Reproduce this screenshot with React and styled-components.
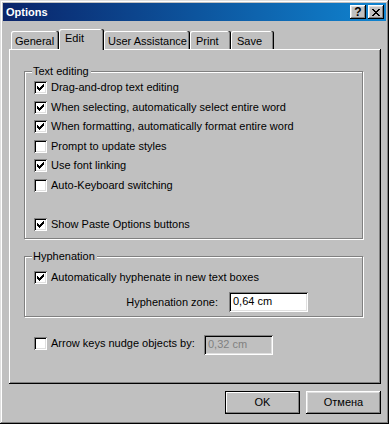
import React from 'react';
import styled, { createGlobalStyle } from 'styled-components';

const GlobalStyle = createGlobalStyle`
  html, body {
    margin: 0;
    padding: 0;
    background: #c0c0c0;
  }
  body {
    font-family: "Liberation Sans", Arial, sans-serif;
    font-size: 11px;
    line-height: 13px;
    color: #000;
  }
`;

const Window = styled.div`
  width: 389px;
  height: 424px;
  box-sizing: border-box;
  padding: 3px;
  background: #c0c0c0;
  box-shadow: inset -1px -1px #000, inset 1px 1px #dfdfdf, inset -2px -2px #808080, inset 2px 2px #fff;
  display: flex;
  flex-direction: column;
`;

const TitleBar = styled.div`
  height: 18px;
  display: flex;
  align-items: center;
  padding: 0 2px 0 3px;
  background: linear-gradient(to right, #0a246a, #1084d0);
  color: #fff;
  font-weight: bold;
`;

const TitleText = styled.span`
  flex: 1;
`;

const CaptionButton = styled.div`
  width: 16px;
  height: 14px;
  box-sizing: border-box;
  margin-left: ${(p) => (p.$gap ? '2px' : '0')};
  background: #c0c0c0;
  box-shadow: inset -1px -1px #000, inset 1px 1px #fff, inset -2px -2px #808080, inset 2px 2px #dfdfdf;
  color: #000;
  display: flex;
  align-items: center;
  justify-content: center;
  font-size: 12px;
  font-weight: bold;
  line-height: 12px;
`;

const TabRow = styled.div`
  display: flex;
  align-items: flex-end;
  height: 20px;
  margin: 8px 0 0 8px;
  position: relative;
  z-index: 1;
`;

const Tab = styled.div`
  box-sizing: border-box;
  width: ${(p) => p.$w}px;
  height: ${(p) => (p.$active ? 21 : 18)}px;
  margin-bottom: ${(p) => (p.$active ? -1 : 0)}px;
  padding: ${(p) => (p.$active ? 3 : 4)}px 0 0 ${(p) => p.$pad}px;
  background: #c0c0c0;
  border-radius: 2px 2px 0 0;
  box-shadow: inset -1px 0 #000, inset -2px 0 #808080, inset 1px 1px #fff;
  white-space: nowrap;
`;

const Panel = styled.div`
  width: 372px;
  height: 335px;
  margin-left: 6px;
  box-sizing: border-box;
  padding: 22px 0 0 15px;
  box-shadow: inset -1px -1px #000, inset 1px 1px #fff, inset -2px -2px #808080;
  display: flex;
  flex-direction: column;
`;

const Group = styled.div`
  width: 339px;
  box-sizing: border-box;
  margin-top: ${(p) => p.$top || 0}px;
  padding: 0 0 4px 9px;
  border: 1px solid #808080;
  box-shadow: 1px 1px 0 #fff, inset 1px 1px #fff;
  display: flex;
  flex-direction: column;
`;

const GroupLabel = styled.div`
  align-self: flex-start;
  margin: -7px 0 0 -2px;
  padding: 0 2px 0 1px;
  background: #c0c0c0;
`;

const Row = styled.div`
  display: flex;
  align-items: center;
  height: ${(p) => p.$h || 19.5}px;
  margin-top: ${(p) => p.$top || 0}px;
`;

const Spacer = styled.div`
  height: 19.5px;
`;

const Box = styled.span`
  width: 13px;
  height: 13px;
  flex: none;
  box-sizing: border-box;
  margin-right: 4px;
  background: #fff;
  box-shadow: inset 1px 1px #808080, inset -1px -1px #fff, inset 2px 2px #000, inset -2px -2px #dfdfdf;
  display: block;
`;

const ZoneRow = styled.div`
  display: flex;
  align-items: center;
  justify-content: flex-end;
  height: 20px;
  margin-top: 5px;
  padding-right: 54px;
`;

const ZoneLabel = styled.span`
  margin-right: 11px;
`;

const Field = styled.div`
  width: ${(p) => p.$w}px;
  height: 20px;
  box-sizing: border-box;
  padding: 3px 0 0 4px;
  background: ${(p) => (p.$disabled ? '#c0c0c0' : '#fff')};
  color: ${(p) => (p.$disabled ? '#808080' : '#000')};
  box-shadow: inset 1px 1px #808080, inset -1px -1px #fff, inset 2px 2px #000, inset -2px -2px #dfdfdf;
`;

const NudgeRow = styled.div`
  display: flex;
  align-items: flex-start;
  height: 20px;
  margin: 18px 0 0 10px;
`;

const NudgeCheck = styled.div`
  display: flex;
  align-items: center;
  width: 170px;
  margin-top: 2px;
`;

const ButtonRow = styled.div`
  display: flex;
  justify-content: flex-end;
  gap: 6px;
  margin: 7px 5px 0 0;
`;

const Button = styled.div`
  width: 75px;
  height: 23px;
  box-sizing: border-box;
  display: flex;
  align-items: center;
  justify-content: center;
  box-shadow: ${(p) =>
    p.$default
      ? 'inset 0 0 0 1px #000, inset -2px -2px #808080, inset 2px 2px #fff'
      : 'inset -1px -1px #000, inset 1px 1px #fff, inset -2px -2px #808080, inset 2px 2px #dfdfdf'};
`;

const checkCols = [2, 3, 4, 3, 2, 1, 0];

function Checkbox({ checked }) {
  return (
    <Box>
      {checked && (
        <svg width="13" height="13" shapeRendering="crispEdges">
          {checkCols.map((y, i) => (
            <rect key={i} x={3 + i} y={3 + y} width="1" height="3" fill="#000" />
          ))}
        </svg>
      )}
    </Box>
  );
}

function Option({ checked, children }) {
  return (
    <Row>
      <Checkbox checked={checked} />
      <span>{children}</span>
    </Row>
  );
}

const tabs = [
  { label: 'General', w: 48, pad: 4 },
  { label: 'Edit', w: 45, pad: 6, active: true },
  { label: 'User Assistance', w: 86, pad: 4 },
  { label: 'Print', w: 41, pad: 6 },
  { label: 'Save', w: 43, pad: 6 },
];

export default function App() {
  return (
    <>
      <GlobalStyle />
      <Window>
        <TitleBar>
          <TitleText>Options</TitleText>
          <CaptionButton>?</CaptionButton>
          <CaptionButton $gap>
            <svg width="8" height="7" shapeRendering="crispEdges">
              <path d="M0 0h2l2 2.5 2-2.5h2l-3 3.5 3 3.5h-2l-2-2.5-2 2.5h-2l3-3.5z" fill="#000" />
            </svg>
          </CaptionButton>
        </TitleBar>

        <TabRow>
          {tabs.map((t) => (
            <Tab key={t.label} $w={t.w} $pad={t.pad} $active={t.active}>
              {t.label}
            </Tab>
          ))}
        </TabRow>

        <Panel>
          <Group>
            <GroupLabel>Text editing</GroupLabel>
            <Option checked>Drag-and-drop text editing</Option>
            <Option checked>When selecting, automatically select entire word</Option>
            <Option checked>When formatting, automatically format entire word</Option>
            <Option>Prompt to update styles</Option>
            <Option checked>Use font linking</Option>
            <Option>Auto-Keyboard switching</Option>
            <Spacer />
            <Option checked>Show Paste Options buttons</Option>
          </Group>

          <Group $top={17}>
            <GroupLabel>Hyphenation</GroupLabel>
            <Row $h={20} $top={4}>
              <Checkbox checked />
              <span>Automatically hyphenate in new text boxes</span>
            </Row>
            <ZoneRow>
              <ZoneLabel>Hyphenation zone:</ZoneLabel>
              <Field $w={79}>0,64 cm</Field>
            </ZoneRow>
          </Group>

          <NudgeRow>
            <NudgeCheck>
              <Checkbox />
              <span>Arrow keys nudge objects by:</span>
            </NudgeCheck>
            <Field $w={69} $disabled>0,32 cm</Field>
          </NudgeRow>
        </Panel>

        <ButtonRow>
          <Button $default>OK</Button>
          <Button>Отмена</Button>
        </ButtonRow>
      </Window>
    </>
  );
}
